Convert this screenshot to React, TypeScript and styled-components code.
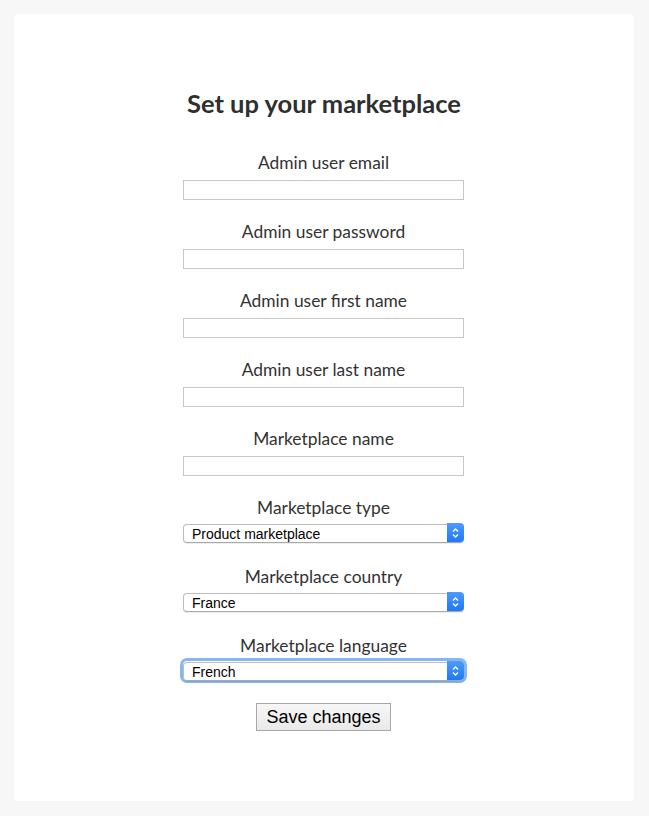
import React from "react";
import styled, { createGlobalStyle } from "styled-components";

const Global = createGlobalStyle`
  html, body { margin: 0; padding: 0; background: #f6f7f6; }
  body { font-family: Lato, "Open Sans", sans-serif; color: #333; }
  * { box-sizing: border-box; }
`;

const Page = styled.div`
  padding: 14px 15px 15px 14px;
`;

const Card = styled.main`
  background: #fff;
  border-radius: 4px;
  height: 787px;
  padding-top: 74px;
  display: flex;
  flex-direction: column;
  align-items: center;
`;

const Title = styled.h1`
  margin: 0 0 33px;
  font-family: Lato, sans-serif;
  font-weight: 700;
  font-size: 25.5px;
  line-height: 30px;
  color: #2f2f2f;
`;

const Form = styled.form`
  width: 281px;
  margin-right: 1px;
  display: flex;
  flex-direction: column;
  align-items: stretch;
`;

const Field = styled.div<{ $after: number }>`
  display: flex;
  flex-direction: column;
  align-items: stretch;
  margin-bottom: ${(p) => p.$after}px;
`;

const Label = styled.label<{ $gap: number }>`
  font-family: Lato, sans-serif;
  font-size: 17.4px;
  line-height: 24px;
  text-align: center;
  color: #333;
  margin-bottom: ${(p) => p.$gap}px;
`;

const TextInput = styled.input`
  height: 20px;
  border: 1px solid #c6c6c6;
  background: #fff;
  padding: 0 4px;
  margin: 0;
  outline: none;
`;

const SelectWrap = styled.div<{ $focus?: boolean }>`
  position: relative;
  height: 19px;
  border-radius: 4px;
  box-shadow: ${(p) => (p.$focus ? "0 0 0 3px #86b6f4" : "none")};
`;

const Select = styled.select`
  appearance: none;
  -webkit-appearance: none;
  width: 100%;
  height: 19px;
  margin: 0;
  border: 1px solid #bdbdbd;
  border-bottom-color: #a9a9a9;
  border-radius: 4px;
  background: #fff;
  padding: 1px 0 0 8px;
  font-family: "Liberation Sans", Arial, sans-serif;
  font-size: 14px;
  line-height: 17px;
  color: #000;
  outline: none;
  box-shadow: 0 1px 1px rgba(0, 0, 0, 0.08);
`;

const Stepper = styled.span`
  position: absolute;
  top: 0;
  right: 0;
  width: 17px;
  height: 19px;
  border-radius: 0 4px 4px 0;
  background: linear-gradient(#4c9cfb, #1f78f4);
  display: flex;
  align-items: center;
  justify-content: center;
  pointer-events: none;
`;

const Actions = styled.div`
  display: flex;
  justify-content: center;
  padding-top: 2px;
`;

const Button = styled.button`
  height: 28px;
  padding: 0 9px;
  border: 1px solid #a8a8a8;
  background: linear-gradient(#f7f7f7, #e9e9e9);
  font-family: "Liberation Sans", Arial, sans-serif;
  font-size: 18px;
  color: #000;
  border-radius: 0;
`;

const Arrows = () => (
  <svg width="9" height="12" viewBox="0 0 9 12" fill="none">
    <path d="M2 4.5 L4.5 2 L7 4.5" stroke="#fff" strokeWidth="1.4" />
    <path d="M2 7.5 L4.5 10 L7 7.5" stroke="#fff" strokeWidth="1.4" />
  </svg>
);

const texts = [
  "Admin user email",
  "Admin user password",
  "Admin user first name",
  "Admin user last name",
  "Marketplace name",
];

const selects = [
  { label: "Marketplace type", value: "Product marketplace", options: ["Product marketplace", "Service marketplace", "Rental marketplace"] },
  { label: "Marketplace country", value: "France", options: ["France", "Germany", "United Kingdom"] },
  { label: "Marketplace language", value: "French", options: ["French", "English", "German"], focus: true },
];

export default function App() {
  return (
    <>
      <Global />
      <Page>
        <Card>
          <Title>Set up your marketplace</Title>
          <Form onSubmit={(e) => e.preventDefault()}>
            {texts.map((t, i) => (
              <Field key={t} $after={20}>
                <Label $gap={5} htmlFor={`f${i}`}>{t}</Label>
                <TextInput id={`f${i}`} type={i === 1 ? "password" : "text"} />
              </Field>
            ))}
            {selects.map((s, i) => (
              <Field key={s.label} $after={i === 2 ? 21 : 23}>
                <Label $gap={3} htmlFor={`s${i}`}>{s.label}</Label>
                <SelectWrap $focus={s.focus}>
                  <Select id={`s${i}`} defaultValue={s.value}>
                    {s.options.map((o) => (
                      <option key={o}>{o}</option>
                    ))}
                  </Select>
                  <Stepper>
                    <Arrows />
                  </Stepper>
                </SelectWrap>
              </Field>
            ))}
            <Actions>
              <Button type="submit">Save changes</Button>
            </Actions>
          </Form>
        </Card>
      </Page>
    </>
  );
}
